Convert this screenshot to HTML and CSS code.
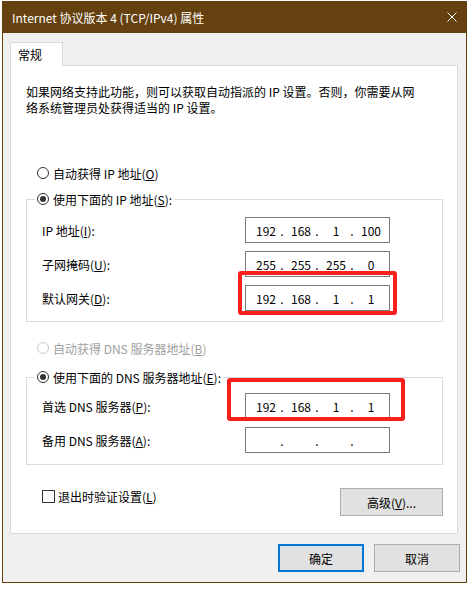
FILE: index.html
```html
<!DOCTYPE html>
<html lang="zh-CN">
  <head>
    <meta charset="UTF-8" />
    <title>Internet 协议版本 4 (TCP/IPv4) 属性</title>
    <link rel="stylesheet" href="styles.css">
  </head>
  <body>
    <div class="window">
      <div class="titlebar">
        <span class="title">Internet 协议版本 4 (TCP/IPv4) 属性</span>
        <svg class="close" width="10" height="10" viewBox="0 0 10 10">
          <path d="M0.5 0.5L9.5 9.5M9.5 0.5L0.5 9.5" stroke="#fff" stroke-width="1" fill="none" />
        </svg>
      </div>

      <div class="dialog-body">
        <div class="tab">常规</div>
        <div class="panel">
          <p class="desc">如果网络支持此功能，则可以获取自动指派的 IP 设置。否则，你需要从网<br>络系统管理员处获得适当的 IP 设置。</p>

          <div class="radio-row first">
            <span class="radio"></span>
            <span>自动获得 IP 地址(<u>O</u>)</span>
          </div>

          <div class="group group-ip">
            <div class="group-head">
              <span class="radio checked"></span>
              <span>使用下面的 IP 地址(<u>S</u>):</span>
            </div>
            <div class="field-row">
              <span class="label">IP 地址(<u>I</u>):</span>
              <div class="ip"><span class="seg">192</span><span class="dot">.</span><span class="seg">168</span><span class="dot">.</span><span class="seg">1</span><span class="dot">.</span><span class="seg">100</span></div>
            </div>
            <div class="field-row">
              <span class="label">子网掩码(<u>U</u>):</span>
              <div class="ip"><span class="seg">255</span><span class="dot">.</span><span class="seg">255</span><span class="dot">.</span><span class="seg">255</span><span class="dot">.</span><span class="seg">0</span></div>
            </div>
            <div class="field-row">
              <span class="label">默认网关(<u>D</u>):</span>
              <div class="ip"><span class="seg">192</span><span class="dot">.</span><span class="seg">168</span><span class="dot">.</span><span class="seg">1</span><span class="dot">.</span><span class="seg">1</span>
                <span class="mark mark-gateway"></span>
              </div>
            </div>
          </div>

          <div class="radio-row disabled">
            <span class="radio"></span>
            <span>自动获得 DNS 服务器地址(<u>B</u>)</span>
          </div>

          <div class="group group-dns">
            <div class="group-head">
              <span class="radio checked"></span>
              <span>使用下面的 DNS 服务器地址(<u>E</u>):</span>
            </div>
            <div class="field-row">
              <span class="label">首选 DNS 服务器(<u>P</u>):</span>
              <div class="ip"><span class="seg">192</span><span class="dot">.</span><span class="seg">168</span><span class="dot">.</span><span class="seg">1</span><span class="dot">.</span><span class="seg">1</span>
                <span class="mark mark-dns"></span>
              </div>
            </div>
            <div class="field-row">
              <span class="label">备用 DNS 服务器(<u>A</u>):</span>
              <div class="ip"><span class="seg"></span><span class="dot">.</span><span class="seg"></span><span class="dot">.</span><span class="seg"></span><span class="dot">.</span><span class="seg"></span></div>
            </div>
          </div>

          <div class="bottom-row">
            <label class="check-row">
              <span class="checkbox"></span>
              <span>退出时验证设置(<u>L</u>)</span>
            </label>
            <button class="btn btn-advanced">高级(<u>V</u>)...</button>
          </div>
        </div>

        <div class="actions">
          <button class="btn btn-primary">确定</button>
          <button class="btn">取消</button>
        </div>
      </div>
    </div>
  </body>
</html>
```
FILE: styles.css
```css
body {
  margin: 0;
  background: #fff;
  font-family: "Noto Sans CJK SC", "Noto Sans", sans-serif;
  font-size: 12px;
  color: #000;
}

.window {
  margin: 1px 0 0 2px;
  width: 463px;
  border: 1px solid #65410f;
  border-top: 0;
  background: #f0f0f0;
}

.titlebar {
  height: 32px;
  background: #65410f;
  display: flex;
  align-items: center;
  justify-content: space-between;
  padding: 0 9px;
  color: #fff;
}

.dialog-body {
  padding: 9px 8px 10px 7px;
}

.tab {
  position: relative;
  z-index: 1;
  width: 44px;
  height: 23px;
  line-height: 23px;
  padding-left: 7px;
  background: #fff;
  border: 1px solid #d9d9d9;
  border-bottom: 0;
  margin-bottom: -1px;
}

.panel {
  box-sizing: border-box;
  height: 469px;
  background: #fff;
  border: 1px solid #d9d9d9;
  overflow: hidden;
}

.desc {
  margin: 18px 0 0 15px;
  line-height: 16px;
}

.radio-row {
  display: flex;
  align-items: center;
  height: 20px;
  margin: 16px 0 0 26px;
}

.radio-row.first {
  margin-top: 47px;
}

.radio-row.disabled {
  color: #a0a0a0;
}

.radio {
  box-sizing: border-box;
  width: 12px;
  height: 12px;
  border: 1px solid #333;
  border-radius: 50%;
  background: #fff;
  margin-right: 4px;
  display: flex;
  align-items: center;
  justify-content: center;
}

.disabled .radio {
  border-color: #c8c8c8;
}

.radio.checked::after {
  content: "";
  width: 6px;
  height: 6px;
  border-radius: 50%;
  background: #333;
}

.group {
  border: 1px solid #dcdcdc;
  margin: 16px 14px 0 15px;
  padding-bottom: 10px;
}

.group-dns {
  margin-top: 19px;
  padding-bottom: 11px;
}

.group-head {
  display: flex;
  align-items: center;
  width: fit-content;
  height: 20px;
  margin: -11px 0 0 8px;
  padding: 0 2px;
  background: #fff;
}

.field-row {
  display: flex;
  align-items: center;
  margin-top: 8px;
  padding-left: 15px;
}

.group-dns .group-head + .field-row {
  margin-top: 6px;
}

.label {
  width: 203px;
}

.ip {
  position: relative;
  box-sizing: border-box;
  width: 145px;
  height: 26px;
  border: 1px solid #7a7a7a;
  background: #fff;
  display: flex;
  align-items: center;
  padding-left: 7px;
}

.seg {
  width: 26px;
  text-align: center;
}

.dot {
  width: 6px;
  margin-right: 3px;
  text-align: center;
}

.mark {
  position: absolute;
  border: 4px solid #ff1e1e;
  border-radius: 3px;
}

.mark-gateway {
  left: -8px;
  right: -8px;
  top: -15px;
  bottom: -5px;
}

.mark-dns {
  left: -19px;
  right: -16px;
  top: -16px;
  bottom: -3px;
}

.bottom-row {
  display: flex;
  justify-content: space-between;
  align-items: flex-start;
  margin: 23px 14px 0 31px;
}

.check-row {
  display: flex;
  align-items: center;
  height: 16px;
}

.checkbox {
  box-sizing: border-box;
  width: 13px;
  height: 13px;
  border: 1px solid #333;
  background: #fff;
  margin-right: 3px;
}

.btn {
  box-sizing: border-box;
  height: 28px;
  width: 86px;
  padding: 0;
  border: 1px solid #adadad;
  background: #e1e1e1;
  font-family: inherit;
  font-size: 12px;
  color: #000;
}

.btn-advanced {
  width: 103px;
}

.btn-primary {
  border: 2px solid #0078d7;
}

.actions {
  display: flex;
  justify-content: flex-end;
  gap: 10px;
  margin: 10px -2px 0 0;
}
```
